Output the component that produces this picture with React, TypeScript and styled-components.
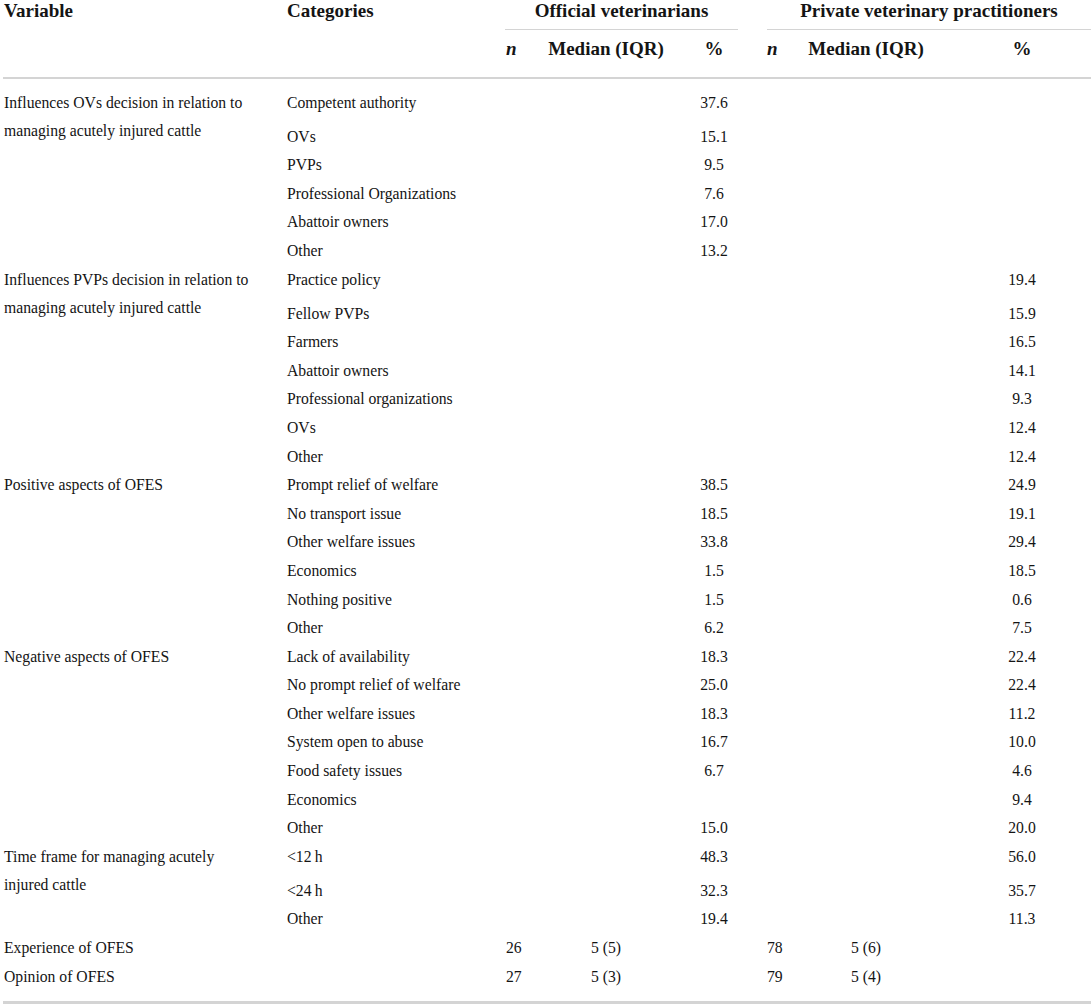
import React from "react";
import styled, { createGlobalStyle } from "styled-components";

const GlobalStyle = createGlobalStyle`
  html, body {
    margin: 0;
    padding: 0;
    background: #ffffff;
  }
  body {
    font-family: "Liberation Serif", "Times New Roman", serif;
    color: #141414;
  }
`;

const COLS = "280px 219px 45px 118px 98px 42px 122px 164px";
const ROW_COLS = "219px 45px 118px 98px 42px 122px 164px";
const ROW_H = 28.6;

const Table = styled.div`
  width: 1088px;
  margin-left: 3px;
`;

const Head = styled.div`
  display: grid;
  grid-template-columns: ${COLS};
  grid-template-rows: 30px 47px;
  border-bottom: 2px solid #d4d4d4;
  font-size: 19px;
  font-weight: 700;
  line-height: 22px;
`;

const HeadCell = styled.div<{ $col: string; $row: string; $align?: string; $pl?: number }>`
  grid-column: ${(p) => p.$col};
  grid-row: ${(p) => p.$row};
  text-align: ${(p) => p.$align || "left"};
  padding-left: ${(p) => p.$pl ?? 0}px;
  white-space: nowrap;
`;

const SubHead = styled(HeadCell)`
  padding-top: 8px;
`;

const GroupTitle = styled.div<{ $col: string; $ml: number; $mr: number }>`
  grid-column: ${(p) => p.$col};
  grid-row: 1;
  box-sizing: border-box;
  height: 30px;
  margin-left: ${(p) => p.$ml}px;
  margin-right: ${(p) => p.$mr}px;
  border-bottom: 1px solid #d4d4d4;
  text-align: center;
  white-space: nowrap;
`;

const Italic = styled.span`
  font-style: italic;
`;

const Body = styled.div`
  padding-top: 9.6px;
  padding-bottom: 9.6px;
  border-bottom: 3px solid #d4d4d4;
  font-size: 15.7px;
`;

const Group = styled.div`
  display: flex;
  align-items: flex-start;
`;

const VariableCell = styled.div`
  width: 280px;
  flex: none;
  box-sizing: border-box;
  padding-left: 1px;
  line-height: ${ROW_H}px;
  white-space: nowrap;
`;

const Rows = styled.div`
  display: flex;
  flex-direction: column;
`;

const Row = styled.div<{ $tall?: boolean }>`
  display: grid;
  grid-template-columns: ${ROW_COLS};
  height: ${(p) => (p.$tall ? 34 : ROW_H)}px;
  align-items: start;
  line-height: ${ROW_H}px;
`;

const Cell = styled.div<{ $align?: string; $pl?: number }>`
  text-align: ${(p) => p.$align || "left"};
  padding-left: ${(p) => p.$pl ?? 0}px;
  white-space: nowrap;
`;

type R = {
  cat?: string;
  ovN?: string;
  ovMed?: string;
  ovPct?: string;
  pvN?: string;
  pvMed?: string;
  pvPct?: string;
};

type G = { variable: string[]; rows: R[] };

const groups: G[] = [
  {
    variable: ["Influences OVs decision in relation to", "managing acutely injured cattle"],
    rows: [
      { cat: "Competent authority", ovPct: "37.6" },
      { cat: "OVs", ovPct: "15.1" },
      { cat: "PVPs", ovPct: "9.5" },
      { cat: "Professional Organizations", ovPct: "7.6" },
      { cat: "Abattoir owners", ovPct: "17.0" },
      { cat: "Other", ovPct: "13.2" },
    ],
  },
  {
    variable: ["Influences PVPs decision in relation to", "managing acutely injured cattle"],
    rows: [
      { cat: "Practice policy", pvPct: "19.4" },
      { cat: "Fellow PVPs", pvPct: "15.9" },
      { cat: "Farmers", pvPct: "16.5" },
      { cat: "Abattoir owners", pvPct: "14.1" },
      { cat: "Professional organizations", pvPct: "9.3" },
      { cat: "OVs", pvPct: "12.4" },
      { cat: "Other", pvPct: "12.4" },
    ],
  },
  {
    variable: ["Positive aspects of OFES"],
    rows: [
      { cat: "Prompt relief of welfare", ovPct: "38.5", pvPct: "24.9" },
      { cat: "No transport issue", ovPct: "18.5", pvPct: "19.1" },
      { cat: "Other welfare issues", ovPct: "33.8", pvPct: "29.4" },
      { cat: "Economics", ovPct: "1.5", pvPct: "18.5" },
      { cat: "Nothing positive", ovPct: "1.5", pvPct: "0.6" },
      { cat: "Other", ovPct: "6.2", pvPct: "7.5" },
    ],
  },
  {
    variable: ["Negative aspects of OFES"],
    rows: [
      { cat: "Lack of availability", ovPct: "18.3", pvPct: "22.4" },
      { cat: "No prompt relief of welfare", ovPct: "25.0", pvPct: "22.4" },
      { cat: "Other welfare issues", ovPct: "18.3", pvPct: "11.2" },
      { cat: "System open to abuse", ovPct: "16.7", pvPct: "10.0" },
      { cat: "Food safety issues", ovPct: "6.7", pvPct: "4.6" },
      { cat: "Economics", pvPct: "9.4" },
      { cat: "Other", ovPct: "15.0", pvPct: "20.0" },
    ],
  },
  {
    variable: ["Time frame for managing acutely", "injured cattle"],
    rows: [
      { cat: "<12\u2009h", ovPct: "48.3", pvPct: "56.0" },
      { cat: "<24\u2009h", ovPct: "32.3", pvPct: "35.7" },
      { cat: "Other", ovPct: "19.4", pvPct: "11.3" },
    ],
  },
  {
    variable: ["Experience of OFES"],
    rows: [{ ovN: "26", ovMed: "5 (5)", pvN: "78", pvMed: "5 (6)" }],
  },
  {
    variable: ["Opinion of OFES"],
    rows: [{ ovN: "27", ovMed: "5 (3)", pvN: "79", pvMed: "5 (4)" }],
  },
];

export default function App() {
  return (
    <>
      <GlobalStyle />
      <Table>
        <Head>
          <HeadCell $col="1" $row="1 / 3" $pl={1}>Variable</HeadCell>
          <HeadCell $col="2" $row="1 / 3" $pl={4}>Categories</HeadCell>
          <GroupTitle $col="3 / 6" $ml={3} $mr={25}>Official veterinarians</GroupTitle>
          <GroupTitle $col="6 / 9" $ml={4} $mr={0}>Private veterinary practitioners</GroupTitle>
          <SubHead $col="3" $row="2" $pl={4}><Italic>n</Italic></SubHead>
          <SubHead $col="4" $row="2" $align="center">Median (IQR)</SubHead>
          <SubHead $col="5" $row="2" $align="center">%</SubHead>
          <SubHead $col="6" $row="2" $pl={4}><Italic>n</Italic></SubHead>
          <SubHead $col="7" $row="2" $align="center">Median (IQR)</SubHead>
          <SubHead $col="8" $row="2" $align="center" $pl={26}>%</SubHead>
        </Head>
        <Body>
          {groups.map((g, gi) => (
            <Group key={gi}>
              <VariableCell>
                {g.variable.map((line, li) => (
                  <div key={li}>{line}</div>
                ))}
              </VariableCell>
              <Rows>
                {g.rows.map((r, ri) => (
                  <Row key={ri} $tall={ri === 0 && g.variable.length > 1}>
                    <Cell $pl={4}>{r.cat}</Cell>
                    <Cell $pl={4}>{r.ovN}</Cell>
                    <Cell $align="center">{r.ovMed}</Cell>
                    <Cell $align="center">{r.ovPct}</Cell>
                    <Cell $pl={4}>{r.pvN}</Cell>
                    <Cell $align="center">{r.pvMed}</Cell>
                    <Cell $align="center" $pl={26}>{r.pvPct}</Cell>
                  </Row>
                ))}
              </Rows>
            </Group>
          ))}
        </Body>
      </Table>
    </>
  );
}
